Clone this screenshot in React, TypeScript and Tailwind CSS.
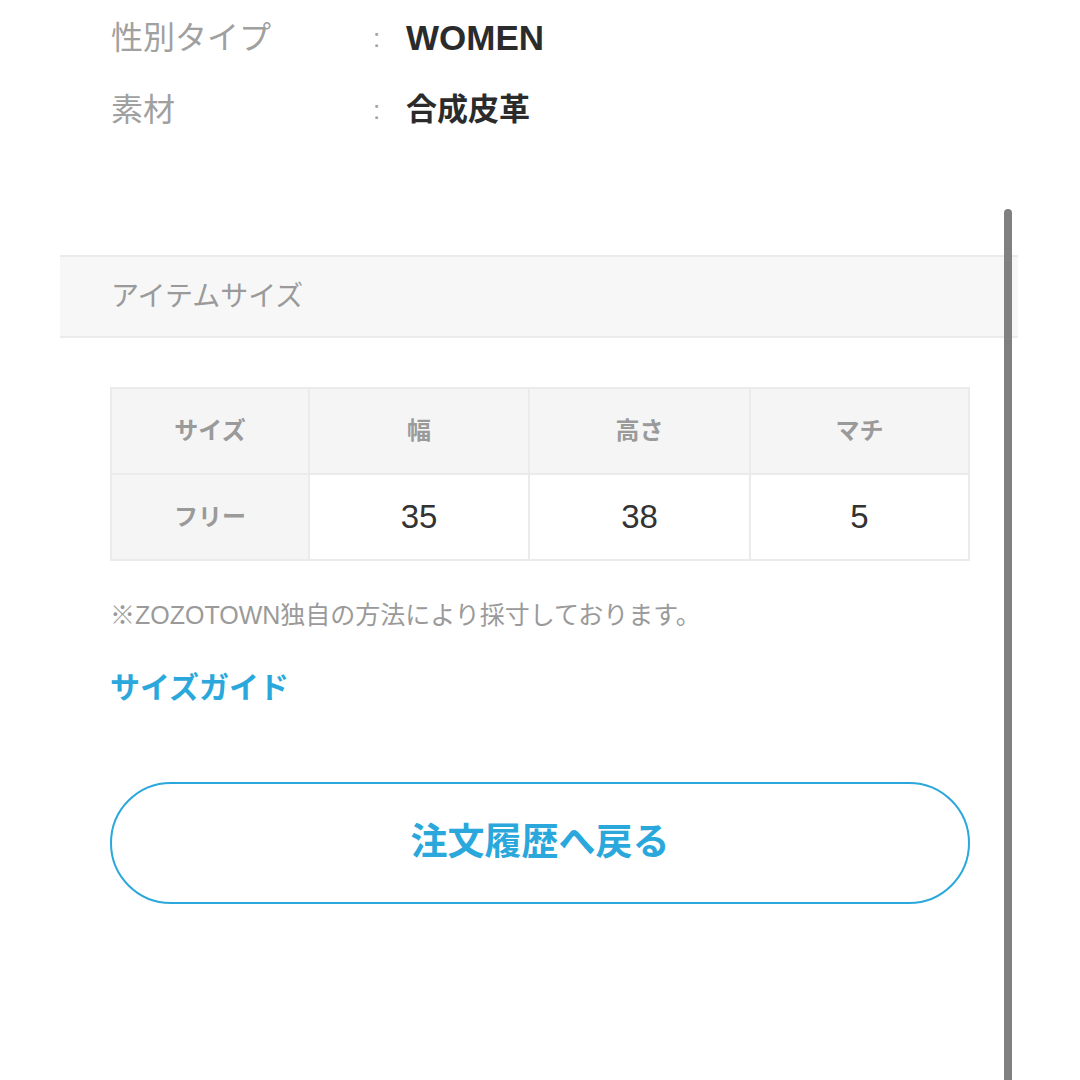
const font = { fontFamily: '"Liberation Sans", "Noto Sans CJK JP", sans-serif' };

const specs = [
  { label: "性別タイプ", value: "WOMEN", size: "text-[35px]" },
  { label: "素材", value: "合成皮革", size: "text-[31px]" },
];

const headers = ["サイズ", "幅", "高さ", "マチ"];
const rows = [["フリー", "35", "38", "5"]];

export default function App() {
  return (
    <div className="relative w-[1080px] h-[1080px] overflow-hidden bg-white" style={font}>
      <div className="pt-[2px]">
        {specs.map((s) => (
          <div key={s.label} className="flex items-center h-[72px] pl-[111px]">
            <div className="w-[262px] text-[32px] text-[#a0a0a0]">{s.label}</div>
            <div className="w-[33px] text-[26px] text-[#a0a0a0]">:</div>
            <div className={`${s.size} font-bold text-[#2b2b2b]`}>{s.value}</div>
          </div>
        ))}
      </div>

      <div className="mt-[109px] ml-[60px] w-[958px] h-[83px] bg-[#f7f7f7] border-y-2 border-[#ebebeb] flex items-center pl-[51px] text-[28px] text-[#9a9a9a]">
        アイテムサイズ
      </div>

      <div className="mx-[110px] mt-[49px]">
        <div className="grid grid-cols-[196px_218px_219px_217px] border-2 border-[#ebebeb] bg-[#ebebeb] gap-[2px]">
          {headers.map((h) => (
            <div key={h} className="h-[84px] bg-[#f5f5f5] flex items-center justify-center text-[24px] font-bold text-[#9a9a9a]">
              {h}
            </div>
          ))}
          {rows.map((r) =>
            r.map((c, i) => (
              <div
                key={i}
                className={
                  i === 0
                    ? "h-[84px] bg-[#f5f5f5] flex items-center justify-center text-[24px] font-bold text-[#9a9a9a]"
                    : "h-[84px] bg-white flex items-center justify-center text-[33px] text-[#333333]"
                }
              >
                {c}
              </div>
            ))
          )}
        </div>

        <p className="mt-[37px] text-[25px] text-[#9a9a9a] leading-[34px]">※ZOZOTOWN独自の方法により採寸しております。</p>
        <a className="block mt-[38px] text-[30px] font-bold text-[#2aa8dc] leading-[36px]">サイズガイド</a>

        <button className="mt-[76px] w-full h-[122px] rounded-full border-2 border-[#2aa8dc] bg-white text-[37px] font-bold text-[#2aa8dc]">
          注文履歴へ戻る
        </button>
      </div>

      <div className="absolute left-[1004px] top-[209px] w-[8px] h-[880px] rounded-full bg-[#808080]" />
    </div>
  );
}
